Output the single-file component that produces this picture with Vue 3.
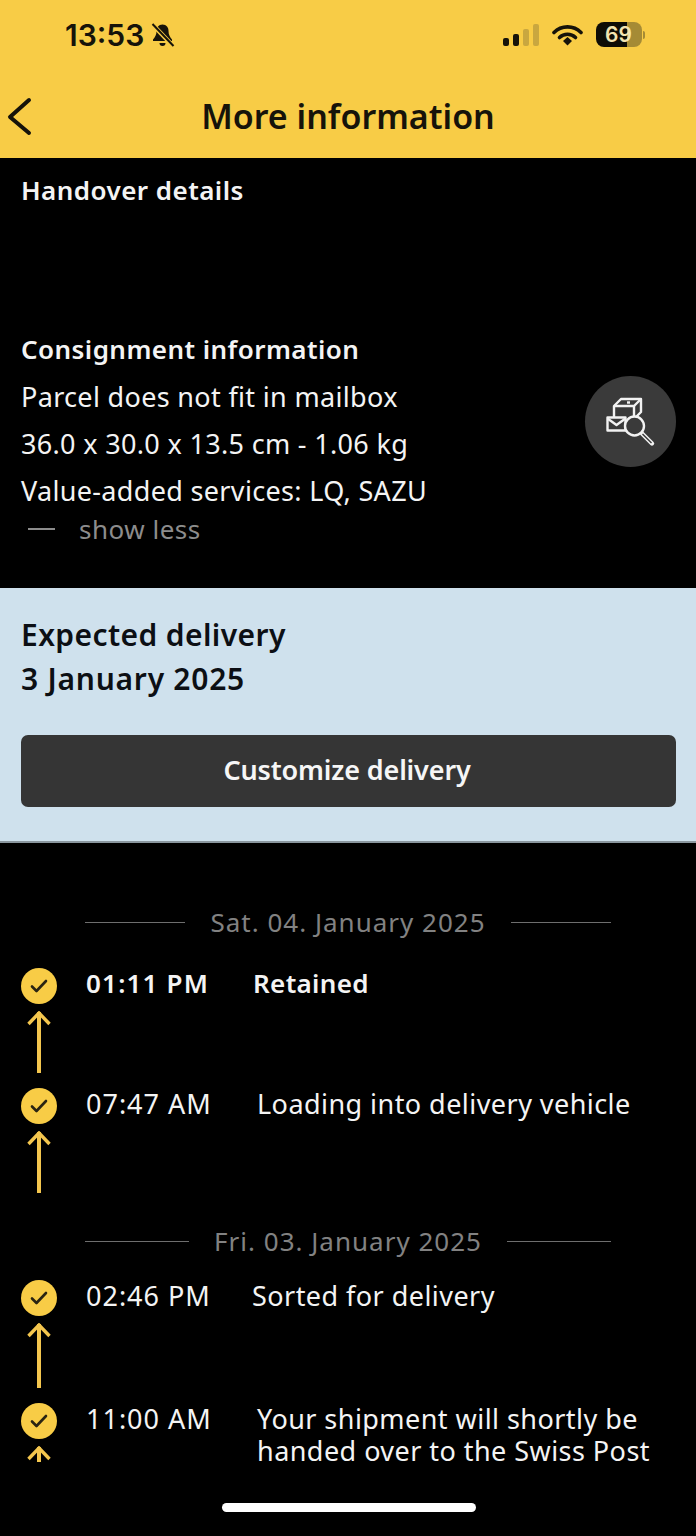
<script setup>
const days = [
  {
    label: "Sat. 04. January 2025",
    rule: 100,
    labelGap: 27,
    events: [
      { time: "01:11 PM", text: ["Retained"], strong: true, gap: 45, tail: 62, height: 120 },
      { time: "07:47 AM", text: ["Loading into delivery vehicle"], gap: 49, tail: 62, height: 105 },
    ],
  },
  {
    label: "Fri. 03. January 2025",
    rule: 104,
    labelGap: 20,
    events: [
      { time: "02:46 PM", text: ["Sorted for delivery"], gap: 44, tail: 65, height: 123 },
      {
        time: "11:00 AM",
        text: ["Your shipment will shortly be", "handed over to the Swiss Post"],
        gap: 49,
        tail: 16,
        height: 90,
      },
    ],
  },
];
</script>

<template>
  <div class="screen">
    <header class="top">
      <div class="status">
        <div class="status-left">
          <span class="clock">13:53</span>
          <svg class="bell" width="25" height="26" viewBox="0 0 25 26">
            <path d="M12.5 2.5c-4 0-6 3-6 6.5 0 4-1.5 6-3.500 8.500v1.500h19v-1.500c-2-2.500-3.500-4.500-3.500-8.500 0-3.500-2-6.500-6-6.500z" fill="#16130a" />
            <path d="M9.500 21h6a3 3 0 0 1-6 0z" fill="#16130a" />
            <path d="M3 3l20 21" stroke="#f8cc46" stroke-width="4.500" />
            <path d="M2.500 2l21 22" stroke="#16130a" stroke-width="2" />
          </svg>
        </div>
        <div class="status-right">
          <svg width="36" height="22" viewBox="0 0 36 22">
            <rect x="0" y="14" width="6" height="8" rx="2" fill="#16130a" />
            <rect x="10" y="10" width="6" height="12" rx="2" fill="#16130a" />
            <rect x="20" y="5" width="6" height="17" rx="2" fill="#c9a73f" />
            <rect x="30" y="0" width="6" height="22" rx="2" fill="#c9a73f" />
          </svg>
          <svg width="31" height="22" viewBox="0 0 31 22">
            <path d="M2 8.500a19 19 0 0 1 27 0" fill="none" stroke="#16130a" stroke-width="3.600" stroke-linecap="round" />
            <path d="M7.500 13.500a11.500 11.500 0 0 1 16 0" fill="none" stroke="#16130a" stroke-width="3.600" stroke-linecap="round" />
            <path d="M11 17l4.500-4 4.500 4-4.500 4.500z" fill="#16130a" />
          </svg>
          <div class="battery">
            <div class="battery-body">
              <span class="battery-num">69</span>
            </div>
            <span class="battery-cap"></span>
          </div>
        </div>
      </div>
      <div class="nav">
        <svg class="back" width="30" height="42" viewBox="0 0 30 42">
          <path d="M24 4L5 21l19 16" fill="none" stroke="#16130a" stroke-width="4" stroke-linecap="round" stroke-linejoin="round" />
        </svg>
        <h1>More information</h1>
      </div>
    </header>

    <section class="details">
      <h2 class="handover">Handover details</h2>
      <div class="consignment">
        <div class="consignment-text">
          <h2>Consignment information</h2>
          <p>Parcel does not fit in mailbox</p>
          <p>36.0 x 30.0 x 13.5 cm - 1.06 kg</p>
          <p>Value-added services: LQ, SAZU</p>
          <div class="toggle">
            <span class="toggle-dash"></span>
            <span>show less</span>
          </div>
        </div>
        <button type="button" class="track-btn" aria-label="Track">
          <svg width="50" height="50" viewBox="0 0 50 50" fill="none" stroke="#f2f2f2" stroke-width="2.400" stroke-linejoin="round">
            <path d="M8 20V9l7-7h20v13l-7 7" />
            <path d="M8 9h20l7-7" />
            <path d="M28 9v12" />
            <path d="M21 5.500h3" />
            <path d="M1.500 20.500h18v13h-18z" fill="#3a3a3a" />
            <path d="M1.500 21.500l9 6.500 9-6.500" />
            <circle cx="28.500" cy="29" r="9.500" fill="#3a3a3a" />
            <path d="M36 36.500l10 10" stroke-width="4.400" stroke-linecap="round" />
            <path d="M36.500 37l9 9" stroke="#3a3a3a" stroke-width="1.400" />
          </svg>
        </button>
      </div>
    </section>

    <section class="delivery">
      <div class="delivery-title">Expected delivery</div>
      <div class="delivery-date">3 January 2025</div>
      <button type="button" class="customize">Customize delivery</button>
    </section>

    <section class="timeline">
      <div v-for="day in days" :key="day.label" class="day">
        <div class="day-label" :style="{ marginBottom: day.labelGap + 'px' }">
          <span class="rule" :style="{ width: day.rule + 'px' }"></span>
          <span>{{ day.label }}</span>
          <span class="rule" :style="{ width: day.rule + 'px' }"></span>
        </div>
        <div v-for="ev in day.events" :key="ev.time" class="event" :style="{ height: ev.height + 'px' }">
          <div class="marker">
            <span class="dot">
              <svg width="18" height="14" viewBox="0 0 18 14">
                <path d="M2 7.500l4.500 4.500 9.500-10" fill="none" stroke="#2a2412" stroke-width="2.600" stroke-linecap="round" stroke-linejoin="round" />
              </svg>
            </span>
            <svg class="arrow" width="24" :height="ev.tail" :viewBox="`0 0 24 ${ev.tail}`">
              <path :d="`M12 1V${ev.tail}`" fill="none" stroke="#f4c64e" stroke-width="4" />
              <path d="M1.500 13L12 2l10.500 11" fill="none" stroke="#f4c64e" stroke-width="3.400" stroke-linejoin="miter" />
            </svg>
          </div>
          <div class="time" :class="{ strong: ev.strong }">{{ ev.time }}</div>
          <div class="what" :class="{ strong: ev.strong }" :style="{ marginLeft: ev.gap + 'px' }">
            <div v-for="line in ev.text" :key="line">{{ line }}</div>
          </div>
        </div>
      </div>
    </section>

    <div class="home-bar"></div>
  </div>
</template>

<style>
html,
body {
  margin: 0;
  background: #000;
}
</style>

<style scoped>
.screen {
  position: relative;
  width: 696px;
  height: 1536px;
  overflow: hidden;
  background: #000;
  color: #f4f4f4;
  font-family: "Noto Sans", "Open Sans", sans-serif;
}

h1,
h2,
p {
  margin: 0;
}

button {
  font-family: inherit;
  border: 0;
}

.top {
  height: 158px;
  background: #f8cc46;
  color: #16130a;
}

.status {
  height: 70px;
  display: flex;
  align-items: center;
  justify-content: space-between;
  padding: 0 51px 0 65px;
}

.status-left {
  display: flex;
  align-items: center;
  gap: 6px;
}

.clock {
  font-family: "Inter", sans-serif;
  font-size: 30px;
  font-weight: 600;
}

.status-right {
  display: flex;
  align-items: center;
  gap: 13px;
  margin-top: -1px;
}

.battery {
  display: flex;
  align-items: center;
  gap: 1px;
}

.battery-body {
  width: 46px;
  height: 25px;
  border-radius: 8px;
  background: linear-gradient(90deg, #0e0c06 31px, #a58b35 31px);
  text-align: left;
  padding-left: 9px;
  box-sizing: border-box;
}

.battery-num {
  display: block;
  line-height: 25px;
  font-family: "Inter", sans-serif;
  font-size: 21px;
  font-weight: 600;
  color: #f3e3b0;
}

.battery-cap {
  width: 2px;
  height: 8px;
  border-radius: 0 2px 2px 0;
  background: #a58b35;
}

.nav {
  position: relative;
  height: 88px;
  display: flex;
  align-items: center;
  justify-content: center;
  padding-top: 4px;
  box-sizing: border-box;
}

.back {
  position: absolute;
  left: 5px;
  top: 26px;
}

.nav h1 {
  font-size: 34px;
  font-weight: 600;
  line-height: 44px;
}

.details {
  height: 430px;
  box-sizing: border-box;
  padding: 16px 20px 0 21px;
}

.details h2 {
  font-size: 26px;
  font-weight: 600;
  line-height: 33px;
  letter-spacing: 0.45px;
}

.handover {
  margin-bottom: 126px;
}

.consignment {
  display: flex;
  justify-content: space-between;
  align-items: flex-start;
}

.consignment-text p {
  font-size: 27px;
  line-height: 47px;
  letter-spacing: 0.33px;
}

.consignment-text h2 {
  margin-bottom: 7px;
}

.toggle {
  display: flex;
  align-items: center;
  font-size: 26px;
  line-height: 32px;
  letter-spacing: 0.5px;
  color: #8c8c8c;
  margin-top: -1px;
}

.toggle-dash {
  width: 27px;
  height: 2px;
  margin: 0 24px 0 7px;
  background: #8c8c8c;
}

.track-btn {
  width: 91px;
  height: 91px;
  margin-top: 43px;
  border-radius: 50%;
  background: #3a3a3a;
  padding: 0;
  display: flex;
  align-items: center;
  justify-content: center;
}

.delivery {
  height: 255px;
  box-sizing: border-box;
  padding: 25px 20px 0 21px;
  background: #cfe1ed;
  color: #0c0f14;
  border-bottom: 2px solid #8b979f;
}

.delivery-title,
.delivery-date {
  font-size: 30px;
  font-weight: 600;
  line-height: 44px;
  letter-spacing: 0.4px;
}

.delivery-date {
  letter-spacing: 0.75px;
}

.customize {
  display: block;
  width: 100%;
  height: 72px;
  margin-top: 34px;
  padding: 0 3px 3px 0;
  border-radius: 7px;
  background: #353535;
  color: #f6f6f6;
  font-size: 27px;
  font-weight: 600;
  letter-spacing: -0.15px;
}

.timeline {
  padding: 60px 20px 0 21px;
}

.day + .day {
  margin-top: 29px;
}

.day-label {
  display: flex;
  align-items: center;
  justify-content: center;
  gap: 25px;
  height: 38px;
  padding-right: 1px;
  font-size: 26px;
  letter-spacing: 1px;
  color: #828282;
}

.rule {
  height: 1px;
  background: #6e6e6e;
}

.event {
  display: flex;
  align-items: flex-start;
  font-size: 27px;
  line-height: 32px;
  letter-spacing: 0.45px;
}

.marker {
  width: 36px;
  display: flex;
  flex-direction: column;
  align-items: center;
  flex-shrink: 0;
}

.dot {
  width: 36px;
  height: 36px;
  margin-bottom: 7px;
  border-radius: 50%;
  background: #f8cc46;
  display: flex;
  align-items: center;
  justify-content: center;
}

.time {
  margin-left: 29px;
  width: 122px;
  flex-shrink: 0;
  white-space: nowrap;
  letter-spacing: 1px;
}

.what {
  white-space: nowrap;
}

.time.strong {
  margin-top: -1px;
  font-size: 26px;
  font-weight: 600;
  letter-spacing: 1.2px;
}

.what.strong {
  margin-top: -1px;
  font-size: 26px;
  font-weight: 600;
  letter-spacing: 0.35px;
}

.home-bar {
  position: absolute;
  left: 222px;
  bottom: 24px;
  width: 254px;
  height: 9px;
  border-radius: 5px;
  background: #fff;
}
</style>
